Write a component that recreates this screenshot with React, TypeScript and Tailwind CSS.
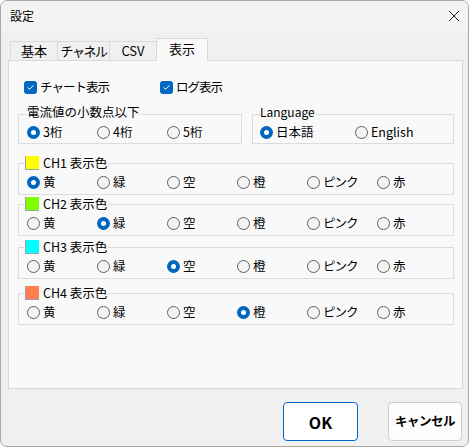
import React from "react";

const FONT = "font-['Noto_Sans_CJK_JP','Noto_Sans',sans-serif]";

function Radio({ checked, label, tight }: { checked?: boolean; label: string; tight?: boolean }) {
  return (
    <div className="flex items-center h-[14px]">
      {checked ? (
        <span className="flex h-[13px] w-[13px] shrink-0 items-center justify-center rounded-full bg-[#0067c0]">
          <span className="h-[5px] w-[5px] rounded-full bg-white" />
        </span>
      ) : (
        <span className="h-[13px] w-[13px] shrink-0 rounded-full border border-[#5f5f5f] bg-[#f4f4f4]" />
      )}
      <span
        className={`ml-[3px] whitespace-nowrap text-[12.5px] leading-[14px] text-black ${tight ? "tracking-[-1px]" : ""}`}
      >
        {label}
      </span>
    </div>
  );
}

function Check({ label }: { label: string }) {
  return (
    <div className="flex items-center">
      <span className="flex h-[13px] w-[13px] items-center justify-center rounded-[3px] bg-[#0067c0]">
        <svg width="9" height="9" viewBox="0 0 9 9" fill="none">
          <path d="M1.8 4.6 L3.6 6.3 L7.2 2.6" stroke="white" strokeWidth="1" strokeLinecap="round" strokeLinejoin="round" />
        </svg>
      </span>
      <span className="ml-[3px] whitespace-nowrap text-[12.5px] leading-[14px] tracking-[-1px] text-black">{label}</span>
    </div>
  );
}

const COLORS = ["黄", "緑", "空", "橙", "ピンク", "赤"];

const CHANNELS = [
  { name: "CH1", swatch: "bg-[#ffff00]", sel: 0, mt: "mt-[19px]" },
  { name: "CH2", swatch: "bg-[#80ff00]", sel: 1, mt: "mt-[9px]" },
  { name: "CH3", swatch: "bg-[#00ffff]", sel: 2, mt: "mt-[11px]" },
  { name: "CH4", swatch: "bg-[#ff7f50]", sel: 3, mt: "mt-[14px]" },
];

function Tab({ label, w, active }: { label: string; w: string; active?: boolean }) {
  if (active) {
    return (
      <div
        className={`${w} relative z-10 -mb-px flex h-[23px] items-start justify-center border border-b-0 border-[#d9d9d9] bg-[#f9f9f9] pt-[1px] text-[13px] leading-[18px]`}
      >
        {label}
      </div>
    );
  }
  return (
    <div
      className={`${w} flex h-[19px] items-center justify-center whitespace-nowrap border border-b-0 border-[#d9d9d9] bg-[#f0f0f0] text-[13px] leading-[18px]`}
    >
      {label}
    </div>
  );
}

export default function App() {
  return (
    <div className={`${FONT} h-[448px] w-[472px] bg-white text-black`}>
      <div className="flex h-[447px] w-[469px] flex-col overflow-hidden rounded-[7px] border border-[#a8a8a8] bg-[#f0f0f0]">
        {/* Title bar */}
        <div className="flex h-[30px] items-center justify-between bg-[#f3f3f3] pl-[9px] pr-[7px]">
          <span className="text-[12px] leading-[14px]">設定</span>
          <svg width="12" height="12" viewBox="0 0 12 12" className="mr-[1px]">
            <path d="M1 1 L11 11 M11 1 L1 11" stroke="#1a1a1a" strokeWidth="1" />
          </svg>
        </div>

        {/* Tabs */}
        <div className="ml-[7px] mt-[7px] flex items-end pl-[2px]">
          <Tab label="基本" w="w-[48px]" />
          <Tab label="チャネル" w="w-[53px] -ml-px tracking-[-1.5px]" />
          <Tab label="CSV" w="w-[48px] -ml-px" />
          <Tab label="表示" w="w-[52px] -ml-px" active />
        </div>

        {/* Panel */}
        <div className="ml-[7px] h-[329px] w-[455px] border border-[#d9d9d9] bg-[#f9f9f9]">
          <div className="mt-[19px] flex pl-[15px]">
            <div className="w-[136px]">
              <Check label="チャート表示" />
            </div>
            <Check label="ログ表示" />
          </div>

          <div className="mt-[20px] flex pl-[9px]">
            <div className="relative h-[30px] w-[224px] border border-[#dcdcdc]">
              <span className="absolute left-[8px] top-[-10px] bg-[#f9f9f9] text-[12.5px] leading-[14px]">
                電流値の小数点以下
              </span>
              <div className="mt-[10px] flex pl-[8px]">
                <div className="w-[70px]"><Radio checked label="3桁" /></div>
                <div className="w-[70px]"><Radio label="4桁" /></div>
                <div className="w-[70px]"><Radio label="5桁" /></div>
              </div>
            </div>
            <div className="relative ml-[10px] h-[30px] w-[202px] border border-[#dcdcdc]">
              <span className="absolute left-[7px] top-[-10px] bg-[#f9f9f9] text-[12px] leading-[14px]">
                Language
              </span>
              <div className="mt-[10px] flex pl-[7px]">
                <div className="w-[95px]"><Radio checked label="日本語" /></div>
                <Radio label="English" />
              </div>
            </div>
          </div>

          {CHANNELS.map((ch) => (
            <div key={ch.name} className={`${ch.mt} pl-[9px]`}>
              <div className="relative h-[32px] w-[436px] border border-[#dcdcdc]">
                <div className="absolute left-[6px] top-[-8px] flex items-center bg-[#f9f9f9] pr-[1px]">
                  <span className={`${ch.swatch} h-[14px] w-[14px] border-b border-l border-[#a0a0a0]`} />
                  <span className="ml-[4px] text-[12.5px] leading-[14px]">{ch.name} 表示色</span>
                </div>
                <div className="mt-[11px] flex pl-[8px]">
                  {COLORS.map((c, i) => (
                    <div key={c} className="w-[70px]">
                      <Radio checked={i === ch.sel} label={c} tight={c === "ピンク"} />
                    </div>
                  ))}
                </div>
              </div>
            </div>
          ))}
        </div>

        {/* Buttons */}
        <div className="mt-[13px] flex justify-end gap-[30px] pr-[6px]">
          <button className="flex h-[39px] w-[75px] items-center justify-center rounded-[4px] border border-[#0067c0] bg-white text-[16px] font-bold leading-none">
            OK
          </button>
          <button className="flex h-[39px] w-[74px] items-center justify-center rounded-[4px] border border-[#d0d0d0] bg-[#fdfdfd] text-[12.5px] font-bold leading-none tracking-[-0.5px]">
            キャンセル
          </button>
        </div>
      </div>
    </div>
  );
}
